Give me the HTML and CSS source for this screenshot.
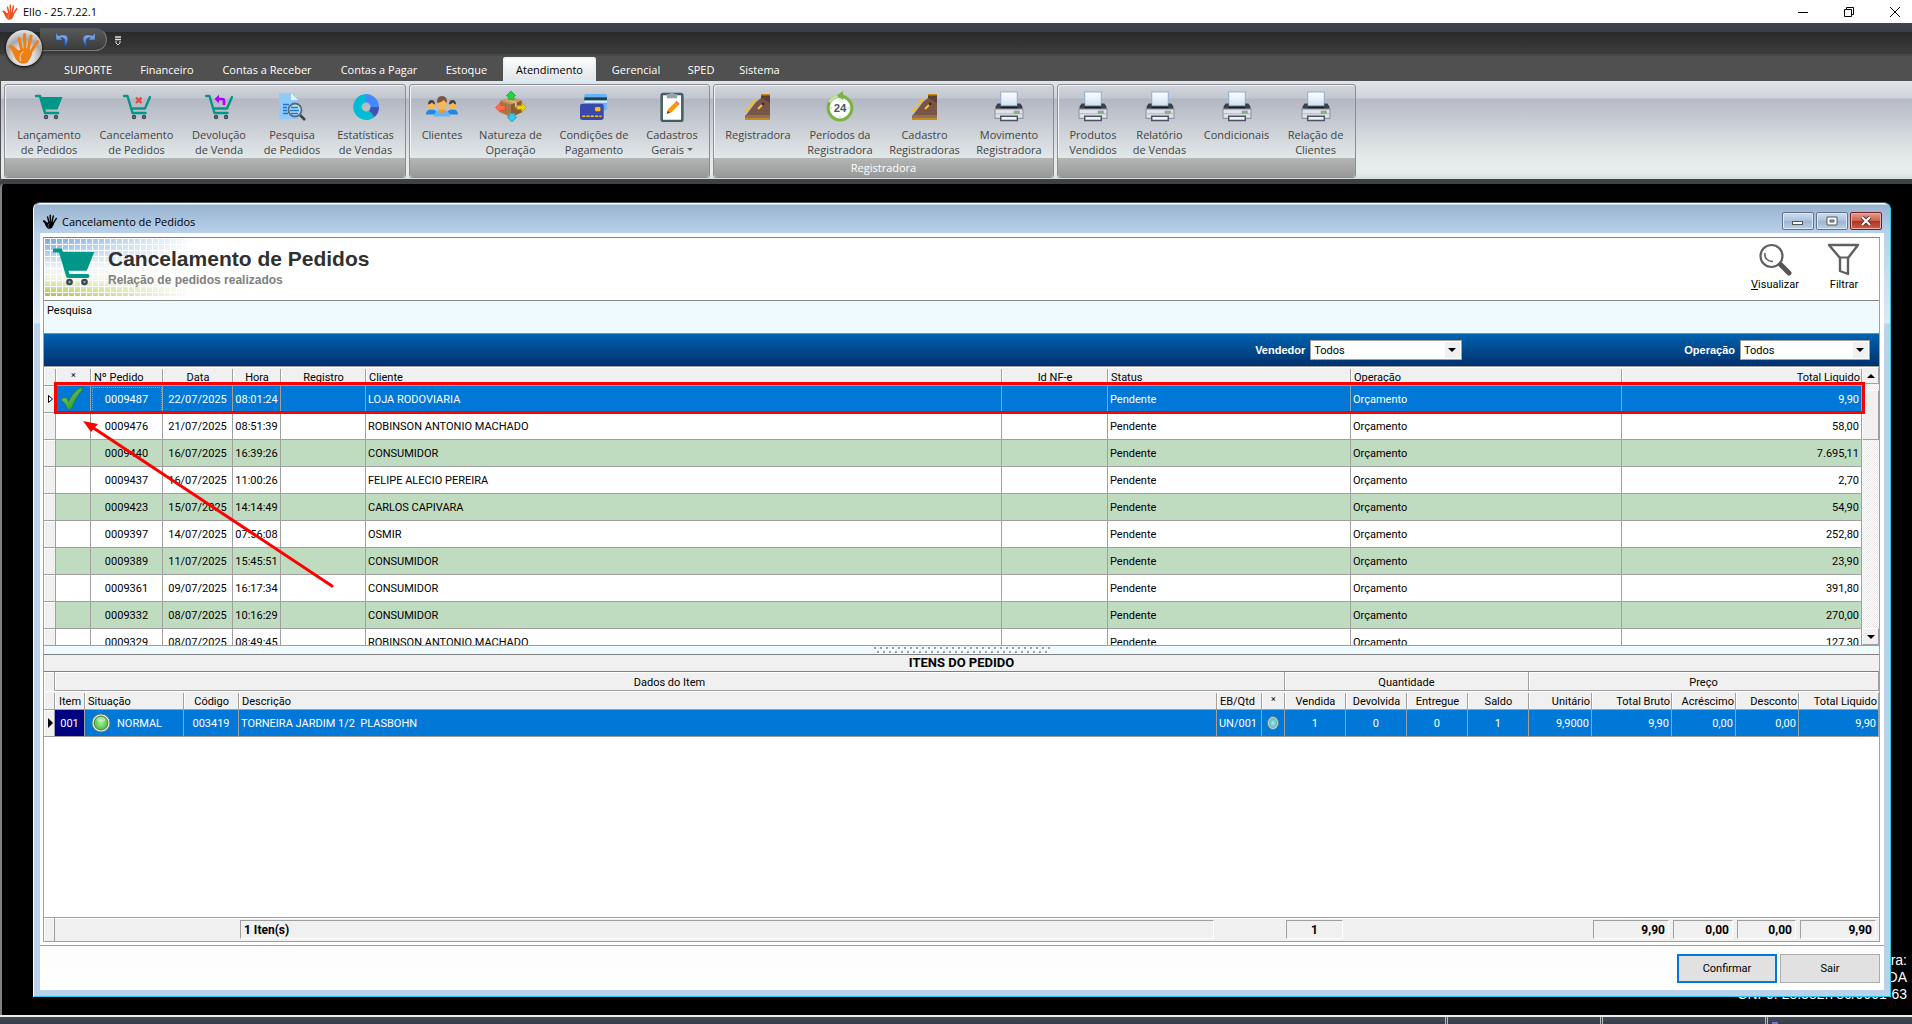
FILE: index.html
```html
<!DOCTYPE html>
<html lang="pt-BR">
<head>
<meta charset="utf-8">
<title>Ello - 25.7.22.1</title>
<link rel="stylesheet" href="styles.css">
</head>
<body>
<svg class="defs" aria-hidden="true">
  <defs>
    <linearGradient id="paper" x1="0" y1="0" x2="0" y2="1"><stop offset="0" stop-color="#fff"/><stop offset="1" stop-color="#cfe2f5"/></linearGradient>
    <linearGradient id="undoBlue" x1="0" y1="0" x2="0" y2="1"><stop offset="0" stop-color="#9cc4f4"/><stop offset="1" stop-color="#1f57b8"/></linearGradient>
    <radialGradient id="ledGreen"><stop offset="0" stop-color="#a6f08e"/><stop offset="1" stop-color="#4fb84a"/></radialGradient>
    <radialGradient id="ledTeal"><stop offset="0" stop-color="#a4f0ee"/><stop offset="1" stop-color="#4fb9bd"/></radialGradient>
    <linearGradient id="checkGreen" x1="0" y1="0" x2="1" y2="1"><stop offset="0" stop-color="#7fd66a"/><stop offset="1" stop-color="#1e8a22"/></linearGradient>
    <pattern id="grip" width="6" height="8" patternUnits="userSpaceOnUse">
      <rect x="1" y="2" width="2" height="2" fill="#fff"/><rect x="0" y="1" width="2" height="2" fill="#a0a0a0"/>
      <rect x="4" y="6" width="2" height="2" fill="#fff"/><rect x="3" y="5" width="2" height="2" fill="#a0a0a0"/>
    </pattern>
  </defs>
  <symbol id="hand" viewBox="0 0 32 32">
    <path d="M14 19 11 6.500M17 18 16.500 2.500M20 18.500 23 4M22.500 20.500 29.500 9.500" stroke="currentColor" stroke-width="3" stroke-linecap="round" fill="none"/>
    <path d="M1 13.500c2-1.200 5 .4 7 2.800 1.500 2 3 2.300 4.500 1.500 3-1.500 7-2 10 .2 2 1.500 2.200 3.500.8 6L20 30c-2 1.800-6 2.200-8.500.8C8.500 29 7 26 5.500 22.500 4.500 19.500 3 17 .8 15.300z" fill="currentColor"/>
    <path d="M12.500 29c-1-4 0-8 3-9.500" stroke="#fff" stroke-opacity=".7" fill="none"/>
  </symbol>
  <symbol id="cart" viewBox="0 0 28 26">
    <path d="M1 2h4l5 17h13" fill="none" stroke="#009688" stroke-width="2.600" stroke-linecap="round" stroke-linejoin="round"/>
    <path d="M5 3h22.500l-5 12.500H9z" fill="#009688"/>
    <circle cx="11" cy="23" r="2.200" fill="#37474f"/><circle cx="21" cy="23" r="2.200" fill="#37474f"/><circle cx="11" cy="23" r=".8" fill="#90a4ae"/><circle cx="21" cy="23" r=".8" fill="#90a4ae"/>
  </symbol>
  <symbol id="cart-open" viewBox="0 0 28 26">
    <path d="M1 2h3.500l5 17h13M8 14.500h14l5-11.500" fill="none" stroke="#009688" stroke-width="2.400" stroke-linecap="round" stroke-linejoin="round"/>
    <circle cx="11" cy="23" r="2.200" fill="#37474f"/><circle cx="21" cy="23" r="2.200" fill="#37474f"/><circle cx="11" cy="23" r=".8" fill="#90a4ae"/><circle cx="21" cy="23" r=".8" fill="#90a4ae"/>
  </symbol>
  <symbol id="cart-x" viewBox="0 0 28 26">
    <use href="#cart-open" width="28" height="26"/>
    <path d="M13 3.500 18.500 9M18.500 3.500 13 9" stroke="#f44336" stroke-width="2.400"/>
  </symbol>
  <symbol id="cart-back" viewBox="0 0 28 26">
    <use href="#cart-open" width="28" height="26"/>
    <path d="M19 11V7q0-2-2-2h-4" stroke="#aa00ff" stroke-width="2.600" fill="none"/><path d="M14 .8v8.400L9.500 5z" fill="#aa00ff"/>
  </symbol>
  <symbol id="doc-search" viewBox="0 0 28 28">
    <path d="M1 0h13l6 6v20H1z" fill="#90caf9"/><path d="M13 0v7h7z" fill="#e1f5fe"/>
    <path d="M5 11.500h6M5 14.500h4M5 17.500h4M5 20.500h5" stroke="#1976d2" stroke-width="1.600"/>
    <path d="m22 22 5 5" stroke="#37474f" stroke-width="2.600"/>
    <circle cx="17" cy="17" r="6.500" fill="#bbdefb" stroke="#546e7a" stroke-width="1.800"/>
    <path d="M13 14.500h7M12 17.500h9M13 20.500h7" stroke="#1976d2" stroke-width="1.600"/>
  </symbol>
  <symbol id="donut" viewBox="0 0 28 28">
    <path d="M14 1a13 13 0 1 0 8.500 23L17 17.500A4.500 4.500 0 1 1 14 9.500z" fill="#00bcd4"/>
    <path d="M14 1a13 13 0 0 1 13 13h-8.500A4.500 4.500 0 0 0 14 9.500z" fill="#448aff"/>
    <path d="M27 14a13 13 0 0 1-4.500 10L17 17.500a4.500 4.500 0 0 0 1.500-3.500z" fill="#3f51b5"/>
  </symbol>
  <symbol id="people" viewBox="0 0 32 22">
    <path d="M0 19q0-5 5.500-5t5.500 5zM21 19q0-5 5.500-5t5.500 5z" fill="#1e88e5"/>
    <ellipse cx="5.500" cy="9.500" rx="3.400" ry="4.300" fill="#ffb74d"/><ellipse cx="26.500" cy="9.500" rx="3.400" ry="4.300" fill="#ffb74d"/>
    <path d="M2 9q0-4.500 3.500-4.500T9 9Q7 8.500 6 7 4 9 2 9zM23 9q0-4.500 3.500-4.500T30 9q-2-.5-3-2-2 2-4 2z" fill="#424242"/>
    <path d="M8 21q0-6.500 8-6.500t8 6.500z" fill="#64b5f6"/><path d="M13 14h6v2q-3 3-6 0z" fill="#f59a1b"/>
    <ellipse cx="16" cy="7.500" rx="4.600" ry="6" fill="#ffb74d"/><path d="M11 7.500Q10.500.5 16 .5t5 7q-2-1-3-3-3 3-7 3z" fill="#795548"/>
  </symbol>
  <symbol id="box-arrows" viewBox="0 0 32 32">
    <path d="m5 10 11-4 11 4v12l-11 5-11-5z" fill="#a9764b"/><path d="m5 10 11 4 11-4-11-4z" fill="#c99a68"/><path d="M16 14v13l11-5V10z" fill="#8b5a34"/><path d="m11 8 10 4v5" stroke="#dcb98c" stroke-width="2" fill="none"/>
    <path d="m16 0 5 5h-2v4h-6V5h-2z" fill="#1fd43f" stroke="#129a2a" stroke-width=".6"/>
    <path d="m17 32 5-5h-2v-4h-6v4h-2z" fill="#35c8ee" stroke="#1591b5" stroke-width=".6"/>
    <path d="m0 17 5-5v3h5v5H5v2z" fill="#ff7048" stroke="#d63a1a" stroke-width=".6"/>
    <path d="m32 17-5-5v3h-5v4h5v3z" fill="#e8cf12" stroke="#a88f00" stroke-width=".6"/>
  </symbol>
  <symbol id="cards" viewBox="0 0 26 26">
    <rect x="4" y="1" width="21" height="15" rx="1.500" fill="#64b5f6"/><path d="M4 4h21v3H4z" fill="#263f4d"/><path d="M4 7h21v2H4z" fill="#e3f2fd"/>
    <rect x="0" y="10" width="22" height="15" rx="2" fill="#3949ab"/><rect x="14" y="13" width="5" height="4" rx="1" fill="#ffc107"/><path d="M2 21.500h18" stroke="#ffc107" stroke-width="1.400" stroke-dasharray="3 1"/>
  </symbol>
  <symbol id="clipboard" viewBox="0 0 24 30">
    <rect x="2" y="3" width="20" height="26" rx="1.500" fill="#fff" stroke="#455a64" stroke-width="2.400"/>
    <path d="M7 3h3a2 2 0 0 1 4 0h3v4H7z" fill="#90a4ae"/>
    <path d="m7 22 1-4 7-7 3 3-7 7z" fill="#ff9800"/><path d="m15 11 1.500-1.500 3 3L18 14z" fill="#e57373"/><path d="m7 22 1-3 2 2z" fill="#37474f"/>
  </symbol>
  <symbol id="register" viewBox="0 0 28 28">
    <path d="M17 1h9v4h-9z" fill="#5d4037"/><path d="M17 1h9v1.500h-9z" fill="#c68a17"/>
    <path d="M2 22 12 9l5-4h9v17z" fill="#795548"/><path d="M18 5h8v5z" fill="#5d4037"/>
    <path d="M1 22h25v4H1z" fill="#8d6e63"/><path d="M1 25h25v2H1z" fill="#c68a17"/>
    <path d="m2 18 3-3M6 13l3-3M9 9l3-3" stroke="#ffc107" stroke-width="2"/><path d="m14 16 5-5" stroke="#fbc02d" stroke-width="2.200"/><circle cx="19" cy="11" r="1.500" fill="#3e2723"/>
  </symbol>
  <symbol id="clock24" viewBox="0 0 28 30">
    <circle cx="14" cy="16.500" r="11.500" fill="#fff" stroke="#7cb342" stroke-width="3"/>
    <path d="M4 11A12 12 0 0 1 12 4.800" stroke="#c5dfa8" stroke-width="3" fill="none"/>
    <path d="m11 4 6-4v9z" fill="#7cb342"/><path d="M14 7v2M14 24v2M4.500 16.500h2M21.500 16.500h2" stroke="#b0bec5"/>
    <text x="14" y="20.500" text-anchor="middle" class="clock-text">24</text>
  </symbol>
  <symbol id="printer" viewBox="0 0 30 30">
    <path d="M7 1h16v13H7z" fill="url(#paper)" stroke="#8fb0d0"/>
    <path d="M4 12h3v3h16v-3h3l2 3v3H2v-3z" fill="#3a4048"/><path d="M7 15h16v2H7z" fill="#14181c"/>
    <path d="M1.500 17.500h27v9h-27z" fill="#dfe2ea" stroke="#8d94a2"/><path d="M2 22h26" stroke="#b4bac6"/>
    <path d="M20 19.500h5v2h-5z" fill="#8fc08a" stroke="#6a9068" stroke-width=".6"/>
    <path d="M7 24.500h16v4H7z" fill="#eef2f8" stroke="#4c535e" stroke-width="1.400"/>
  </symbol>
</svg>

<header class="titlebar">
  <svg class="app-icon"><use href="#hand"/></svg>
  <span class="app-title">Ello - 25.7.22.1</span>
  <div class="sys-buttons">
    <button type="button" aria-label="Minimizar"><svg width="10" height="10"><path d="M0 5.500h10" stroke="#000"/></svg></button>
    <button type="button" aria-label="Restaurar"><svg width="10" height="10"><path d="M.5 2.500h7v7h-7zM2.500 2.500v-2h7v7h-2" fill="none" stroke="#000"/></svg></button>
    <button type="button" aria-label="Fechar"><svg width="10" height="10"><path d="m0 0 10 10M10 0 0 10" stroke="#000"/></svg></button>
  </div>
</header>

<div class="caption">
  <button type="button" class="orb" aria-label="Menu Ello"><svg><use href="#hand"/></svg></button>
  <div class="quick">
    <button type="button" aria-label="Desfazer"><svg width="16" height="16" viewBox="0 0 16 16"><path d="M1 1v7h7L5.500 5.800C9 5 11 7 9 15c5-4 6-12-.5-12C6 3 4.500 3.500 3.500 4z" fill="url(#undoBlue)" stroke="#1c4796" stroke-width=".5"/></svg></button>
    <button type="button" aria-label="Refazer"><svg width="16" height="16" viewBox="0 0 16 16"><path d="M15 1v7H8l2.500-2.200C7 5 5 7 7 15c-5-4-6-12 .5-12C10 3 11.500 3.500 12.500 4z" fill="url(#undoBlue)" stroke="#1c4796" stroke-width=".5"/></svg></button>
  </div>
  <button type="button" class="quick-more" aria-label="Personalizar"><svg width="6" height="10"><path d="M0 1h6M0 3.500h6" stroke="#ddd" stroke-width="1.500"/><path d="M1 5v2l2 2 2-2V5" fill="none" stroke="#ddd"/></svg></button>
</div>

<nav class="tabs">
  <button type="button">SUPORTE</button><button type="button">Financeiro</button><button type="button">Contas a Receber</button><button type="button">Contas a Pagar</button><button type="button">Estoque</button><button type="button" class="active">Atendimento</button><button type="button">Gerencial</button><button type="button">SPED</button><button type="button">Sistema</button>
</nav>

<div class="ribbon">
  <section class="group">
    <div class="tools tools-orders">
      <button type="button"><svg><use href="#cart"/></svg><span>Lançamento<br>de Pedidos</span></button>
      <button type="button"><svg><use href="#cart-x"/></svg><span>Cancelamento<br>de Pedidos</span></button>
      <button type="button"><svg><use href="#cart-back"/></svg><span>Devolução<br>de Venda</span></button>
      <button type="button"><svg><use href="#doc-search"/></svg><span>Pesquisa<br>de Pedidos</span></button>
      <button type="button"><svg><use href="#donut"/></svg><span>Estatísticas<br>de Vendas</span></button>
    </div>
    <div class="group-name"></div>
  </section>
  <section class="group">
    <div class="tools tools-records">
      <button type="button"><svg class="wide"><use href="#people"/></svg><span>Clientes</span></button>
      <button type="button"><svg class="wide"><use href="#box-arrows"/></svg><span>Natureza de<br>Operação</span></button>
      <button type="button"><svg><use href="#cards"/></svg><span>Condições de<br>Pagamento</span></button>
      <button type="button"><svg class="wide"><use href="#clipboard"/></svg><span>Cadastros<br>Gerais <i class="caret"></i></span></button>
    </div>
    <div class="group-name"></div>
  </section>
  <section class="group">
    <div class="tools tools-register">
      <button type="button"><svg><use href="#register"/></svg><span>Registradora</span></button>
      <button type="button"><svg class="wide"><use href="#clock24"/></svg><span>Períodos da<br>Registradora</span></button>
      <button type="button"><svg><use href="#register"/></svg><span>Cadastro<br>Registradoras</span></button>
      <button type="button"><svg class="wide"><use href="#printer"/></svg><span>Movimento<br>Registradora</span></button>
    </div>
    <div class="group-name">Registradora</div>
  </section>
  <section class="group">
    <div class="tools tools-reports">
      <button type="button"><svg class="wide"><use href="#printer"/></svg><span>Produtos<br>Vendidos</span></button>
      <button type="button"><svg class="wide"><use href="#printer"/></svg><span>Relatório<br>de Vendas</span></button>
      <button type="button"><svg class="wide"><use href="#printer"/></svg><span>Condicionais</span></button>
      <button type="button"><svg class="wide"><use href="#printer"/></svg><span>Relação de<br>Clientes</span></button>
    </div>
    <div class="group-name"></div>
  </section>
</div>

<main class="workspace">
  <p class="license">para:<br>LTDA<br>CNPJ: 28.382.786/0001-63</p>
  <section class="window">
    <div class="window-title">
      <svg><use href="#hand"/></svg>
      <span>Cancelamento de Pedidos</span>
      <div class="window-buttons">
        <button type="button" aria-label="Minimizar"><svg width="12" height="10"><rect x=".5" y="5.500" width="10" height="3" fill="#fff" stroke="#555"/></svg></button>
        <button type="button" aria-label="Maximizar"><svg width="12" height="10"><path d="M1 1h10v8H1z" fill="#fff" stroke="#555"/><path d="M4 4h4v2H4z" fill="#9db6d4" stroke="#555"/></svg></button>
        <button type="button" class="close" aria-label="Fechar"><svg width="12" height="10"><path d="m2 1 8 8M10 1 2 9" stroke="#5d3030" stroke-width="4"/><path d="m2 1 8 8M10 1 2 9" stroke="#fff" stroke-width="2"/></svg></button>
      </div>
    </div>
    <div class="client">
      <div class="panel">
        <header class="heading">
          <svg class="heading-icon"><use href="#cart"/></svg>
          <div class="heading-text"><h1>Cancelamento de Pedidos</h1><p>Relação de pedidos realizados</p></div>
          <button type="button"><svg width="34" height="34" viewBox="0 0 34 34"><circle cx="13.500" cy="13" r="11" fill="none" stroke="#606060" stroke-width="2.200"/><path d="M7 10c-1 5 3 9 8 8.500" stroke="#606060" stroke-width="1.600" fill="none"/><path d="m23 22 8 8" stroke="#555" stroke-width="5" stroke-linecap="round"/><path d="m20.500 20 3 3" stroke="#555" stroke-width="2"/></svg><span><u>V</u>isualizar</span></button>
          <button type="button"><svg width="34" height="34" viewBox="0 0 34 34"><path d="M2 2h29L21 15v16l-8-3V15z" fill="none" stroke="#606060" stroke-width="2.400" stroke-linejoin="round"/><path d="M13 14.500h8" stroke="#606060" stroke-width="2"/></svg><span>Filtrar</span></button>
        </header>
        <div class="search">Pesquisa</div>
        <div class="filters">
          <label for="vendedor">Vendedor</label>
          <div class="combo combo-seller"><select id="vendedor"><option>Todos</option></select></div>
          <label for="operacao">Operação</label>
          <div class="combo combo-operation"><select id="operacao"><option>Todos</option></select></div>
        </div>
        <div class="orders">
          <table class="grid">
            <colgroup><col class="c-mark"><col class="c-check"><col class="c-order"><col class="c-date"><col class="c-hour"><col class="c-reg"><col><col class="c-nfe"><col class="c-status"><col class="c-op"><col class="c-total"></colgroup>
            <thead><tr><th></th><th class="mid star">×</th><th>Nº Pedido</th><th class="mid">Data</th><th class="mid">Hora</th><th class="mid">Registro</th><th>Cliente</th><th class="mid">Id NF-e</th><th>Status</th><th>Operação</th><th class="num">Total Liquido</th></tr></thead>
            <tbody>
              <tr class="selected"><td><svg class="marker" width="6" height="8"><path d="m.5 .5 4 3.500-4 3.500z" fill="#fff" stroke="#000"/></svg></td><td><svg class="check" width="24" height="24" viewBox="0 0 24 24"><path d="M1 13q2-3 5-2.500 1.500 1 2.500 4Q13 5 20 1q2.500-.5 3 1Q15 11 11.500 21.500q-2 2-4 .5Q5 15 1 13z" fill="url(#checkGreen)" stroke="#1d7a20" stroke-width=".7"/></svg></td><td class="mid focus">0009487</td><td class="mid">22/07/2025</td><td class="mid">08:01:24</td><td></td><td>LOJA RODOVIARIA</td><td></td><td>Pendente</td><td>Orçamento</td><td class="num">9,90</td></tr>
              <tr><td></td><td></td><td class="mid">0009476</td><td class="mid">21/07/2025</td><td class="mid">08:51:39</td><td></td><td>ROBINSON ANTONIO MACHADO</td><td></td><td>Pendente</td><td>Orçamento</td><td class="num">58,00</td></tr>
              <tr><td></td><td></td><td class="mid">0009440</td><td class="mid">16/07/2025</td><td class="mid">16:39:26</td><td></td><td>CONSUMIDOR</td><td></td><td>Pendente</td><td>Orçamento</td><td class="num">7.695,11</td></tr>
              <tr><td></td><td></td><td class="mid">0009437</td><td class="mid">16/07/2025</td><td class="mid">11:00:26</td><td></td><td>FELIPE ALECIO PEREIRA</td><td></td><td>Pendente</td><td>Orçamento</td><td class="num">2,70</td></tr>
              <tr><td></td><td></td><td class="mid">0009423</td><td class="mid">15/07/2025</td><td class="mid">14:14:49</td><td></td><td>CARLOS CAPIVARA</td><td></td><td>Pendente</td><td>Orçamento</td><td class="num">54,90</td></tr>
              <tr><td></td><td></td><td class="mid">0009397</td><td class="mid">14/07/2025</td><td class="mid">07:56:08</td><td></td><td>OSMIR</td><td></td><td>Pendente</td><td>Orçamento</td><td class="num">252,80</td></tr>
              <tr><td></td><td></td><td class="mid">0009389</td><td class="mid">11/07/2025</td><td class="mid">15:45:51</td><td></td><td>CONSUMIDOR</td><td></td><td>Pendente</td><td>Orçamento</td><td class="num">23,90</td></tr>
              <tr><td></td><td></td><td class="mid">0009361</td><td class="mid">09/07/2025</td><td class="mid">16:17:34</td><td></td><td>CONSUMIDOR</td><td></td><td>Pendente</td><td>Orçamento</td><td class="num">391,80</td></tr>
              <tr><td></td><td></td><td class="mid">0009332</td><td class="mid">08/07/2025</td><td class="mid">10:16:29</td><td></td><td>CONSUMIDOR</td><td></td><td>Pendente</td><td>Orçamento</td><td class="num">270,00</td></tr>
              <tr><td></td><td></td><td class="mid">0009329</td><td class="mid">08/07/2025</td><td class="mid">08:49:45</td><td></td><td>ROBINSON ANTONIO MACHADO</td><td></td><td>Pendente</td><td>Orçamento</td><td class="num">127,30</td></tr>
            </tbody>
          </table>
          <div class="scrollbar">
            <button type="button" aria-label="Subir"><i class="up"></i></button>
            <div class="thumb"></div>
            <button type="button" class="last" aria-label="Descer"><i class="down"></i></button>
          </div>
          <div class="highlight"></div>
          <svg class="arrow" width="254" height="170" viewBox="0 0 254 170"><path d="m10 8 240 159" stroke="#f00" stroke-width="3" stroke-linecap="round"/><path d="m1 2 15 3-7 8z" fill="#f00"/></svg>
        </div>
        <div class="splitter"><svg width="176" height="8"><rect width="176" height="8" fill="url(#grip)"/></svg></div>
        <h2>ITENS DO PEDIDO</h2>
        <div class="items">
          <table class="grid">
            <colgroup><col class="i-mark"><col class="i-item"><col class="i-sit"><col class="i-code"><col><col class="i-unit"><col class="i-led"><col class="i-qty"><col class="i-qty"><col class="i-qty"><col class="i-qty"><col class="i-price"><col class="i-total"><col class="i-added"><col class="i-price"><col class="i-total"></colgroup>
            <thead>
              <tr class="bands"><th></th><th colspan="6" class="mid">Dados do Item</th><th colspan="4" class="mid">Quantidade</th><th colspan="5" class="mid">Preço</th></tr>
              <tr><th></th><th class="mid">Item</th><th>Situação</th><th class="num code">Código</th><th>Descrição</th><th>EB/Qtd</th><th class="mid star">×</th><th class="mid">Vendida</th><th class="mid">Devolvida</th><th class="mid">Entregue</th><th class="mid">Saldo</th><th class="num">Unitário</th><th class="num">Total Bruto</th><th class="num">Acréscimo</th><th class="num">Desconto</th><th class="num">Total Liquido</th></tr>
            </thead>
            <tbody>
              <tr class="selected"><td><svg class="marker" width="6" height="10"><path d="m0 0 5 5-5 5z"/></svg></td><td class="mid navy">001</td><td><span class="situation"><svg width="20" height="20"><circle cx="10" cy="10" r="9" fill="#eef3ee" stroke="#6c7f70"/><circle cx="10" cy="10" r="7" fill="url(#ledGreen)" stroke="#3c7a40" stroke-width=".8"/><ellipse cx="10" cy="6.500" rx="4.500" ry="2.500" fill="#fff" opacity=".45"/></svg>NORMAL</span></td><td class="mid">003419</td><td class="pre">TORNEIRA JARDIM 1/2  PLASBOHN</td><td>UN/001</td><td class="mid"><svg class="led" width="12" height="14"><ellipse cx="6" cy="7" rx="5.500" ry="6.500" fill="#c9d6d4" stroke="#6a7c80"/><ellipse cx="6" cy="7" rx="4" ry="5" fill="url(#ledTeal)"/></svg></td><td class="mid">1</td><td class="mid">0</td><td class="mid">0</td><td class="mid">1</td><td class="num">9,9000</td><td class="num">9,90</td><td class="num">0,00</td><td class="num">0,00</td><td class="num">9,90</td></tr>
              <tr class="blank"><td colspan="16"></td></tr>
            </tbody>
            <tfoot><tr><td></td><td colspan="3"></td><td><span class="sum left">1 Iten(s)</span></td><td colspan="2"></td><td><span class="sum center">1</span></td><td></td><td></td><td></td><td></td><td><span class="sum">9,90</span></td><td><span class="sum">0,00</span></td><td><span class="sum">0,00</span></td><td><span class="sum">9,90</span></td></tr></tfoot>
          </table>
        </div>
      </div>
      <footer class="actions"><button type="button" class="default">Confirmar</button><button type="button">Sair</button></footer>
    </div>
  </section>
</main>
<footer class="status"><span></span><span></span><span></span><span class="tray"><i></i></span></footer>
</body>
</html>
```
FILE: styles.css
```css
:root {
  --line: #a0a0a0;
  --face: #f0f0f0;
  --select: #0078d7;
  --ribbon-font: "Open Sans", "Noto Sans", sans-serif;
  --ui-font: Roboto, "Liberation Sans", sans-serif;
}
* { box-sizing: border-box; }
body {
  margin: 0;
  height: 100vh;
  display: flex;
  flex-direction: column;
  overflow: hidden;
  background: #505050;
  font: 11px/15px var(--ui-font);
  color: #000;
}
button { font: inherit; color: inherit; border: 0; background: none; padding: 0; margin: 0; }
h1, h2, p { margin: 0; }
svg { display: block; }
.defs { position: absolute; width: 0; height: 0; }

/* Application title */
.titlebar { flex: none; height: 23px; display: flex; align-items: center; background: #fff; padding-left: 2px; font: 11px/16px var(--ribbon-font); }
.app-icon { width: 16px; height: 16px; color: #f4511e; }
.app-title { margin-left: 5px; }
.sys-buttons { display: flex; gap: 12px; margin-left: auto; }
.sys-buttons button { width: 34px; height: 20px; display: grid; place-items: center; }

.caption {
  position: relative;
  flex: none;
  height: 33px;
  display: flex;
  align-items: flex-start;
  padding: 5px 0 0 40px;
  background: linear-gradient(#40444f 0, #3a3d48 9px, #2a2a2a 9px, #3c3c3c 31px, #484848 31px);
}
.orb {
  position: absolute;
  left: 6px;
  top: 7px;
  z-index: 2;
  width: 36px;
  height: 36px;
  border-radius: 50%;
  background: radial-gradient(circle at 50% 75%, #fff 0, #dcdcdc 30%, #a8a8a8 55%, #f4f4f4 90%);
  box-shadow: 0 1px 3px #000;
  color: #f07f13;
}
.orb svg { width: 32px; height: 32px; margin: 1px 2px; }
.quick {
  display: flex;
  gap: 9px;
  width: 67px;
  height: 23px;
  padding: 1px 0 0 15px;
  border: 1px solid #777;
  border-top-color: #555;
  border-left: 0;
  border-radius: 0 12px 12px 0;
  background: linear-gradient(#595959, #3a3a3a);
}
.quick-more { margin: 8px 0 0 8px; }

.tabs {
  flex: none;
  height: 25px;
  display: grid;
  grid-template-columns: 72px 78px 114px 102px 65px 93px 72px 50px 59px;
  column-gap: 4px;
  padding: 1px 0 0 52px;
  background: #505050;
  color: #fff;
  font: 11px/22px var(--ribbon-font);
}
.tabs button { padding-top: 2px; }
.tabs .active { background: linear-gradient(#fff, #dfe2e8); color: #000; border-radius: 3px 3px 0 0; box-shadow: inset 0 0 2px 1px #d4f3fa; }

/* Ribbon */
.ribbon {
  flex: none;
  height: 103px;
  display: flex;
  gap: 3px;
  padding: 3px 3px 1px;
  border-left: 1px solid #505050;
  border-bottom: 5px solid #404144;
  background: linear-gradient(#e2e5ea 0, #d0d3da 17px, #b6bac5 18px, #e4eaea 76px, #e6edec 92px, #d8dcdc 100%);
}
.group {
  display: flex;
  flex-direction: column;
  padding: 1px;
  border: 1px solid #8a8d92;
  border-radius: 3px;
  background: linear-gradient(#d3d6dd 0, #c2c6cf 13px, #b2b7c2 14px, #c8ccd3 40px, #e2e9e9 74px);
  box-shadow: inset 1px 1px 0 #f2f3f5;
}
.tools { flex: 1; display: grid; padding: 0 2px; color: #444; font: 11px/15px var(--ribbon-font); }
.tools-orders { grid-template-columns: 82px 93px 72px 74px 73px; }
.tools-records { grid-template-columns: 58px 79px 88px 68px; }
.tools-register { grid-template-columns: 82px 82px 87px 82px; }
.tools-reports { grid-template-columns: 64px 69px 85px 73px; }
.tools button { display: flex; flex-direction: column; align-items: center; padding-top: 5px; gap: 4px; white-space: nowrap; }
.tools svg { width: 28px; height: 32px; padding: 2px 0; }
.tools svg.wide { width: 32px; padding: 0 0 1px; }
.clock-text { font: bold 11px "Liberation Sans", sans-serif; fill: #455a64; }
.caret { display: inline-block; border: 3px solid transparent; border-top-color: #666; border-bottom: 0; vertical-align: 3px; }
.group-name { height: 19px; margin: 0 -1px -1px; padding-top: 1px; text-align: center; color: #fff; background: linear-gradient(#b3b6b5, #989a99); font: 11px/18px var(--ribbon-font); border-radius: 0 0 3px 3px; }

/* Workspace and child window */
.workspace { position: relative; flex: 1; min-height: 0; display: flex; padding: 18px 21px 18px 31px; background: #000; border-left: 2px solid #808080; border-radius: 4px 0 0; }
.license { position: absolute; right: 5px; bottom: 12px; text-align: right; color: #fff; font: 14px/17px "Liberation Sans", sans-serif; }
.window {
  position: relative;
  flex: 1;
  min-width: 0;
  display: flex;
  flex-direction: column;
  padding: 0 6px 6px;
  border: 1px solid #26c6ea;
  border-top-color: #4a5560;
  border-left-color: #fff;
  border-radius: 7px 7px 0 0;
  background: linear-gradient(#fff 0, #fff 1px, #99b4d1 2px, #b9d1ea 30px, #dde9f6 120px, #b9d1ea 121px);
}
.window-title { flex: none; height: 30px; display: flex; align-items: center; gap: 4px; padding: 7px 2px 0; font: 11px/16px var(--ribbon-font); }
.window-title > svg { width: 16px; height: 15px; }
.window-buttons { display: flex; gap: 2px; margin: -2px 0 0 auto; }
.window-buttons button { width: 32px; height: 18px; display: grid; place-items: center; border: 1px solid #60738c; border-radius: 2px; background: linear-gradient(#cfdeee, #a9c1dd 50%, #9bb4d2 50%, #b8cfe8); box-shadow: inset 0 0 0 1px #dce8f5; }
.window-buttons .close { border-color: #6e2020; background: linear-gradient(#e29a8c, #cc5f4c 50%, #b0301c 50%, #c9604c); box-shadow: inset 0 0 0 1px #e8b0a4; }
.client { flex: 1; min-height: 0; display: flex; flex-direction: column; padding-top: 4px; background: #fff; }
.panel { flex: 1; min-height: 0; display: flex; flex-direction: column; margin: 0 4px 3px 3px; border: 1px solid var(--line); border-top-color: #808080; }

.heading {
  flex: none;
  height: 63px;
  display: flex;
  padding: 5px 18px 0 9px;
  border-bottom: 1px solid #888;
  background:
    linear-gradient(90deg, transparent, #fff 150px),
    repeating-linear-gradient(90deg, #fff 0 1px, transparent 1px 6px),
    repeating-linear-gradient(#fff 0 1px, transparent 1px 6px),
    linear-gradient(#6fa5dc, #eef4fa 30px, #f2f5dc 40px, #a9c03c 58px, #fff 58px);
}
.heading-icon { width: 42px; height: 40px; margin-top: 4px; }
.heading-text { flex: 1; padding: 4px 0 0 13px; font-family: "Liberation Sans", Arial, sans-serif; }
.heading h1 { font-size: 21px; line-height: 24px; color: #303030; }
.heading p { font-size: 12px; line-height: 18px; font-weight: bold; color: #808080; }
.heading button { width: 68px; display: flex; flex-direction: column; align-items: center; }
.heading button span { line-height: 16px; }
.heading button:last-child { width: 34px; margin-left: 18px; }
.search { flex: none; height: 33px; padding: 2px 3px; background: #effaff; border-bottom: 1px solid #888; }
.filters { flex: none; height: 33px; display: flex; align-items: center; justify-content: flex-end; padding: 0 9px 0 0; border-bottom: 1px solid var(--line); background: linear-gradient(#0063b0, #00306c); }
.filters label { font: bold 11px/16px "Liberation Sans", Arial, sans-serif; color: #fff; margin-right: 5px; }
.combo { position: relative; height: 20px; background: #fff; border: 1px solid var(--line); }
.combo select { appearance: none; width: 100%; height: 18px; border: 0; padding: 0 3px; background: none; font: inherit; color: inherit; }
.combo::after { content: ""; position: absolute; right: 5px; top: 7px; border: 4px solid transparent; border-top-color: #000; border-bottom: 0; pointer-events: none; }
.combo::before { content: ""; position: absolute; right: 1px; top: 1px; bottom: 1px; width: 15px; background: var(--face); }
.combo-seller { width: 152px; margin-right: 222px; }
.combo-operation { width: 130px; }

/* Grids */
.grid { width: 100%; table-layout: fixed; border-collapse: separate; border-spacing: 0; }
.grid th, .grid td { padding: 0 2px; border: 0 solid var(--line); border-width: 0 1px 1px 0; text-align: left; white-space: nowrap; overflow: hidden; font-weight: normal; }
.grid th { height: 19px; padding: 3px 3px 0; line-height: 15px; border-right: 0; background: linear-gradient(90deg, #fff 1px, transparent 1px), linear-gradient(var(--line), var(--line)) 100% 2px / 1px 100% no-repeat, linear-gradient(#fff 1px, var(--face) 1px); }
.grid td { height: 27px; }
.grid .mid { text-align: center; }
.grid .num { text-align: right; padding-right: 2px; }
.grid th.star { font-size: 9px; line-height: 10px; vertical-align: top; }
.grid td:first-child { background: var(--face); box-shadow: inset 1px 1px 0 #fff; }
.grid .selected td:not(:first-child) { background: var(--select); color: #fff; }
.orders tbody tr:nth-child(odd) td { background: #c0dcc0; }
.orders .grid tbody tr td:first-child { background: var(--face); }
.marker { margin-left: 2px; }
.orders { position: relative; flex: 0 0 279px; display: flex; align-items: flex-start; overflow: hidden; border-bottom: 1px solid var(--line); }
.orders .grid { flex: 1; }
.c-mark { width: 12px; } .c-check { width: 35px; } .c-order { width: 72px; } .c-date { width: 70px; } .c-hour { width: 48px; } .c-reg { width: 85px; }
.c-nfe { width: 106px; } .c-status { width: 243px; } .c-op { width: 271px; } .c-total { width: 240px; }
.focus { outline: 1px dotted #e08a3c; outline-offset: -2px; }
.check { margin-left: 2px; }
.scrollbar { align-self: stretch; width: 17px; display: flex; flex-direction: column; background: repeating-conic-gradient(#e8e8e8 0 25%, #fff 0 50%) 0 0 / 2px 2px; }
.scrollbar button { height: 17px; display: grid; place-items: center; background: var(--face); border: 1px solid #fff; border-right-color: var(--line); border-bottom-color: var(--line); }
.scrollbar .thumb { margin-top: 6px; height: 50px; background: var(--face); border: 1px solid #fff; border-right-color: var(--line); border-bottom-color: var(--line); }
.scrollbar .last { margin-top: auto; }
.up, .down { border: 4px solid transparent; }
.up { border-top: 0; border-bottom-color: #000; }
.down { border-bottom: 0; border-top-color: #000; }
.highlight { position: absolute; left: 10px; right: 14px; top: 15px; height: 32px; border: 3px solid #f00; }
.arrow { position: absolute; left: 38px; top: 52px; }

.splitter { flex: none; height: 9px; display: flex; justify-content: center; background: #effaff; border-bottom: 1px solid #808080; }
.panel h2 { flex: none; height: 17px; font: bold 13px/16px var(--ui-font); text-align: center; background: var(--face); border-bottom: 1px solid #808080; }

.items { flex: 1; min-height: 0; }
.items .grid { height: 100%; }
.i-mark { width: 11px; } .i-item { width: 30px; } .i-sit { width: 99px; } .i-code { width: 55px; } .i-unit { width: 45px; } .i-led { width: 23px; }
.i-qty { width: 61px; } .i-price { width: 63px; } .i-added { width: 64px; } .i-total { width: 80px; }
.items .bands th { background: linear-gradient(90deg, #fff 1px, transparent 1px), linear-gradient(#fff 1px, var(--face) 1px); border-right: 1px solid var(--line); }
.items .bands th:first-child { border-bottom-color: var(--face); }
.items .grid .code { padding-right: 10px; }
.items .grid .selected .navy { background: #000080; padding: 0; }
.items .grid .pre { white-space: pre; }
.situation { display: flex; align-items: center; gap: 6px; padding-left: 4px; }
.led { margin: auto; }
.items .grid .blank td { height: auto; background: #fff; box-shadow: none; border-right: 0; }
.items tfoot td { height: 22px; padding: 2px 3px 2px 1px; border-width: 0; background: var(--face); box-shadow: inset 0 1px 0 #fff; }
.items tfoot td:first-child { border-right-width: 1px; }
.sum { display: block; height: 19px; padding: 0 3px; border: 1px solid #fff; border-top-color: var(--line); border-left-color: var(--line); font: bold 12px/19px var(--ui-font); text-align: right; }
.sum.left { text-align: left; }
.sum.center { text-align: center; }

.actions { flex: none; height: 45px; display: flex; justify-content: flex-end; gap: 3px; padding: 8px 4px 7px; border-top: 1px solid var(--line); background: linear-gradient(#fcfcfd, #fff); }
.actions button { width: 100px; height: 29px; background: #e1e1e1; border: 1px solid #adadad; }
.actions .default { border: 2px solid var(--select); }

.status { flex: none; height: 9px; display: grid; grid-template-columns: 1fr 155px 165px 144px; border-top: 2px solid #eee; background: linear-gradient(#474a56, #383b45); }
.status span { border-right: 3px double #bbb; }
.status .tray { border: 0; padding: 5px 4px 0; }
.status .tray i { display: block; width: 6px; height: 2px; background: #6f74d8; }
```
